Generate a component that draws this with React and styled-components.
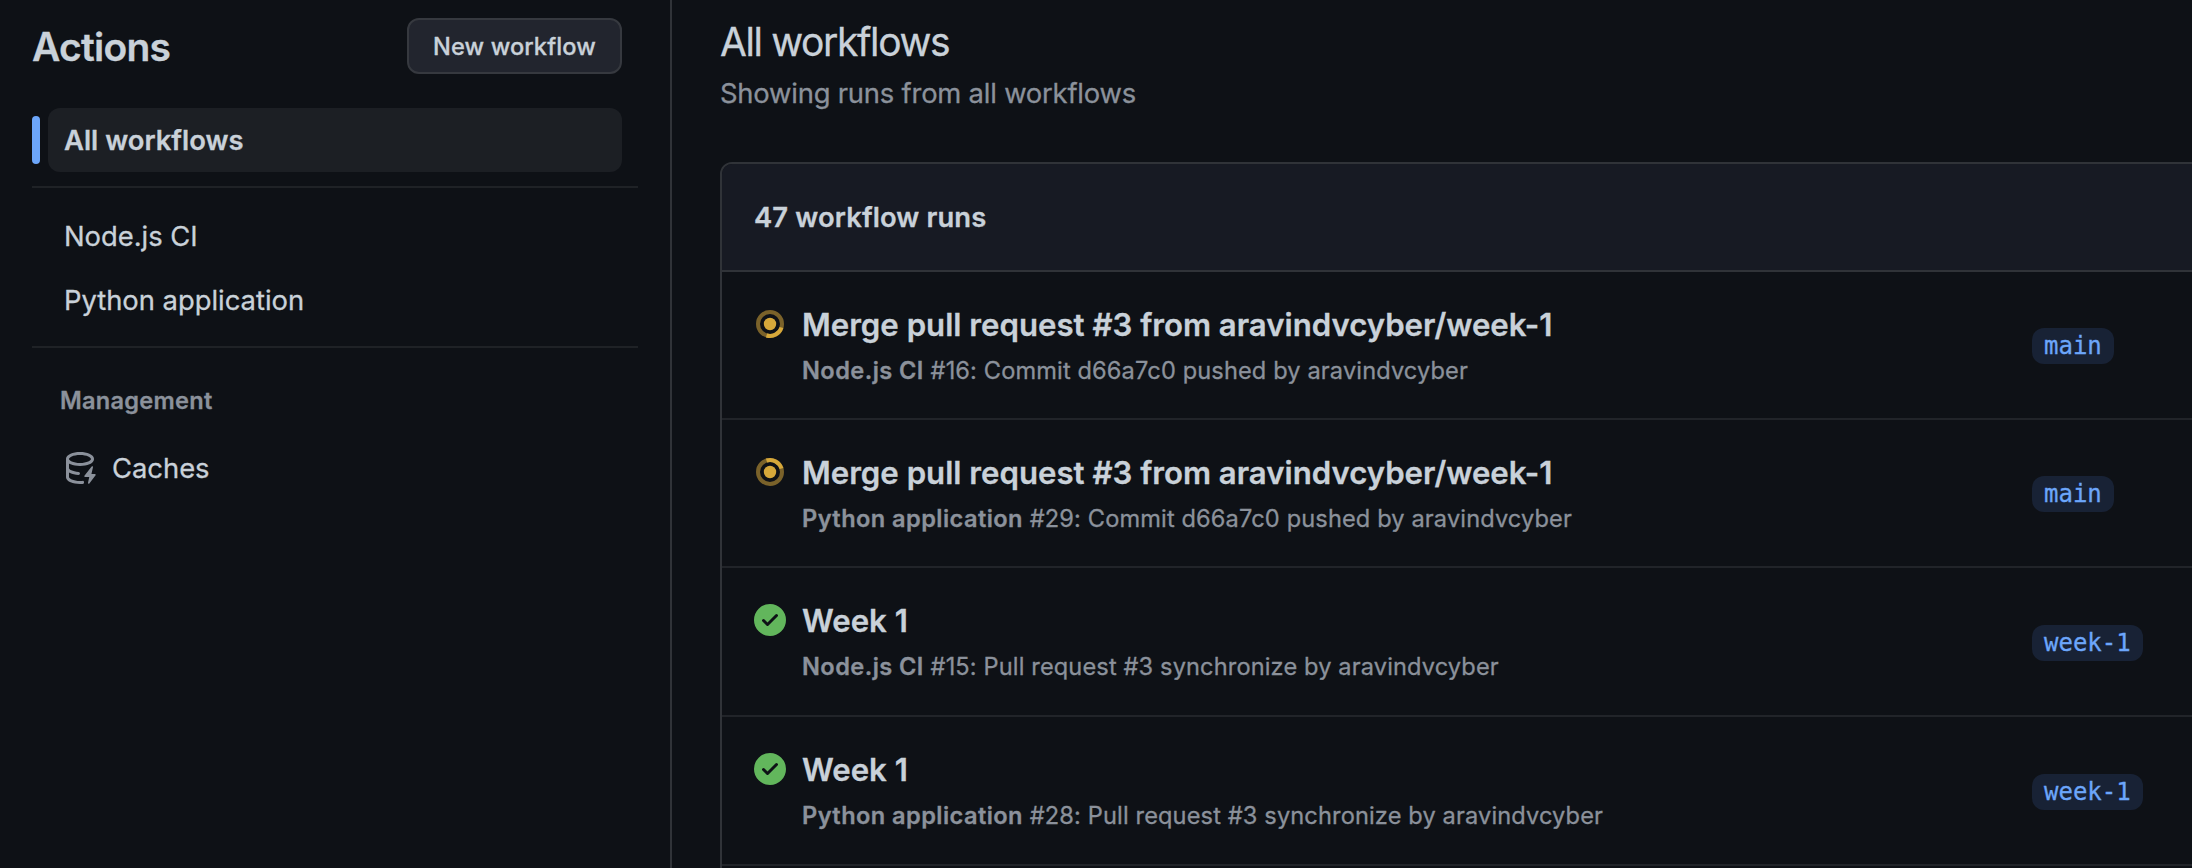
import React from "react";
import styled, { createGlobalStyle } from "styled-components";

const GlobalStyle = createGlobalStyle`
  *, *::before, *::after { box-sizing: border-box; }
  html, body { margin: 0; background: #0e1116; }
  body {
    color: #c9d1d9;
    font-family: Inter, "Liberation Sans", sans-serif;
    font-size: 27.4px;
    overflow: hidden;
    -webkit-font-smoothing: antialiased;
    -webkit-text-stroke: 0.3px currentColor;
  }
`;

const Page = styled.div`
  display: flex;
  width: 100%;
  height: 100vh;
  overflow: hidden;
`;

const Sidebar = styled.aside`
  flex: none;
  width: 672px;
  padding: 18px 32px 0;
  border-right: 2px solid #303338;
`;

const SidebarHeader = styled.header`
  display: flex;
  align-items: center;
  justify-content: space-between;
  height: 56px;
  margin: 0 16px 34px 0;
`;

const SidebarTitle = styled.h2`
  margin: 0;
  padding-top: 1px;
  font-size: 39px;
  font-weight: 600;
  line-height: 56px;
  letter-spacing: -0.75px;
`;

const Button = styled.button`
  width: 215px;
  height: 56px;
  padding: 1px 0 0;
  border: 2px solid #36393f;
  border-radius: 12px;
  background: #22252e;
  color: inherit;
  font: 500 23.6px/1 Inter, "Liberation Sans", sans-serif;
  letter-spacing: 0.1px;
`;

const NavItem = styled.a`
  display: flex;
  align-items: center;
  gap: ${(p) => (p.$selected ? "8px" : "16px")};
  height: 64px;
  margin: 0 16px 0 ${(p) => (p.$selected ? "0" : "16px")};
  padding-left: ${(p) => (p.$selected ? "0" : "16px")};
  letter-spacing: -0.02px;
`;

const SelectedMark = styled.span`
  width: 8px;
  height: 48px;
  border-radius: 6px;
  background: #6ca6fa;
`;

const SelectedLabel = styled.span`
  flex: 1;
  height: 64px;
  padding-left: 16px;
  border-radius: 12px;
  background: #1c1f24;
  font-weight: 600;
  line-height: 64px;
  letter-spacing: 0;
`;

const Divider = styled.hr`
  height: 2px;
  margin: ${(p) => p.$margin};
  border: 0;
  background: #1f2226;
`;

const GroupTitle = styled.h3`
  margin: 0 0 17px;
  padding-left: 28px;
  color: #8b919b;
  font-size: 23.6px;
  font-weight: 600;
  line-height: 36px;
  letter-spacing: 0.25px;
`;

const CacheSvg = styled.svg`
  flex: none;
  width: 32px;
  height: 32px;
  fill: #8b919b;
`;

const Main = styled.main`
  flex: 1;
  min-width: 0;
  padding: 12px 0 0 48px;
`;

const PageTitle = styled.h1`
  margin: 0;
  font-size: 39px;
  font-weight: 400;
  line-height: 60px;
  letter-spacing: -1.38px;
`;

const Subtitle = styled.p`
  margin: 0 0 48px;
  color: #8b919b;
  line-height: 42px;
  letter-spacing: -0.21px;
`;

const RunsBox = styled.section`
  min-height: 900px;
  margin-right: -24px;
  border: 2px solid #303338;
  border-radius: 12px;
  overflow: hidden;
`;

const RunsHeader = styled.header`
  height: 108px;
  padding-left: 32px;
  border-bottom: 2px solid #303338;
  background: #171a23;
  font-weight: 600;
  line-height: 106px;
  letter-spacing: 0.12px;
`;

const Row = styled.article`
  display: grid;
  grid-template-columns: 32px 1214px auto;
  column-gap: 16px;
  justify-content: start;
  align-items: start;
  height: ${(p) => p.$height}px;
  padding-left: 32px;
  border-bottom: 2px solid #212429;
`;

const StatusSvg = styled.svg`
  width: 32px;
  height: 32px;
  margin-top: 36px;
`;

const RunText = styled.div`
  padding-top: 29px;
`;

const RunTitle = styled.h4`
  margin: 0;
  font-size: 31.2px;
  font-weight: 600;
  line-height: 48px;
  letter-spacing: -0.01px;
`;

const RunMeta = styled.p`
  margin: 0;
  padding-top: 1px;
  color: #8b919b;
  font-size: 23.6px;
  line-height: 42px;
  letter-spacing: 0.13px;
`;

const WorkflowName = styled.strong`
  font-weight: 600;
  letter-spacing: 0.43px;
`;

const Branch = styled.a`
  height: 36px;
  margin-top: ${(p) => p.$offset}px;
  padding: 0 12px;
  border-radius: 12px;
  background: #182235;
  color: #6ca6fa;
  font: 24px/36px "DejaVu Sans Mono", monospace;
  justify-self: start;
`;

function CacheIcon() {
  return (
    <CacheSvg viewBox="0 0 16 16">
      <path d="M2.5 5.724V8c0 .248.238.7 1.169 1.159.874.43 2.144.745 3.62.822a.75.75 0 1 1-.078 1.498c-1.622-.085-3.102-.432-4.204-.975a5.565 5.565 0 0 1-.507-.28V12.5c0 .133.058.318.282.551.227.237.591.483 1.101.707 1.015.447 2.47.742 4.117.742.406 0 .802-.018 1.183-.052a.751.751 0 1 1 .134 1.494C8.89 15.98 8.45 16 8 16c-1.805 0-3.475-.32-4.721-.869-.623-.274-1.173-.619-1.579-1.041-.408-.425-.7-.964-.7-1.59v-9c0-.626.292-1.165.7-1.591.406-.42.956-.766 1.579-1.04C4.525.32 6.195 0 8 0c1.806 0 3.476.32 4.721.869.623.274 1.173.619 1.579 1.041.408.425.7.964.7 1.59 0 .626-.292 1.165-.7 1.591-.406.42-.956.766-1.578 1.04C11.475 6.68 9.805 7 8 7c-1.805 0-3.475-.32-4.721-.869a6.15 6.15 0 0 1-.779-.407Zm0-2.224c0 .133.058.318.282.551.227.237.591.483 1.101.707C4.898 5.205 6.353 5.5 8 5.5c1.646 0 3.101-.295 4.118-.742.508-.224.873-.471 1.1-.708.224-.232.282-.417.282-.55 0-.133-.058-.318-.282-.551-.227-.237-.591-.483-1.101-.707C11.102 1.795 9.647 1.5 8 1.5c-1.646 0-3.101.295-4.118.742-.508.224-.873.471-1.1.708-.224.232-.282.417-.282.55Z" />
      <path d="M14.49 7.582a.375.375 0 0 0-.66-.313l-3.625 4.625a.375.375 0 0 0 .295.606h2.127l-.619 2.922a.375.375 0 0 0 .666.304l3.125-4.125A.375.375 0 0 0 15.5 11h-1.778l.769-3.418Z" />
    </CacheSvg>
  );
}

function RunningIcon({ angle }) {
  return (
    <StatusSvg viewBox="0 0 32 32" fill="none">
      <circle cx="16" cy="16" r="12" stroke="#7a622a" strokeWidth="4" />
      <path
        d="M28 16A12 12 0 0 1 16 28"
        stroke="#d6a83a"
        strokeWidth="4"
        transform={`rotate(${angle} 16 16)`}
      />
      <circle cx="16" cy="16" r="6.2" fill="#d6a83a" />
    </StatusSvg>
  );
}

function SuccessIcon() {
  return (
    <StatusSvg viewBox="0 0 16 16" fill="#62b65c">
      <path d="M8 16A8 8 0 1 1 8 0a8 8 0 0 1 0 16Zm3.78-9.72a.751.751 0 0 0-.018-1.042.751.751 0 0 0-1.042-.018L6.75 9.19 5.28 7.72a.751.751 0 0 0-1.042.018.751.751 0 0 0-.018 1.042l2 2a.75.75 0 0 0 1.06 0Z" />
    </StatusSvg>
  );
}

const runs = [
  { icon: <RunningIcon angle={17} />, title: "Merge pull request #3 from aravindvcyber/week-1", workflow: "Node.js CI", meta: "#16: Commit d66a7c0 pushed by aravindvcyber", branch: "main", height: 148, offset: 56 },
  { icon: <RunningIcon angle={-107} />, title: "Merge pull request #3 from aravindvcyber/week-1", workflow: "Python application", meta: "#29: Commit d66a7c0 pushed by aravindvcyber", branch: "main", height: 148, offset: 56 },
  { icon: <SuccessIcon />, title: "Week 1", workflow: "Node.js CI", meta: "#15: Pull request #3 synchronize by aravindvcyber", branch: "week-1", height: 149, offset: 57 },
  { icon: <SuccessIcon />, title: "Week 1", workflow: "Python application", meta: "#28: Pull request #3 synchronize by aravindvcyber", branch: "week-1", height: 149, offset: 57 },
];

export default function App() {
  return (
    <>
      <GlobalStyle />
      <Page>
        <Sidebar>
          <SidebarHeader>
            <SidebarTitle>Actions</SidebarTitle>
            <Button>New workflow</Button>
          </SidebarHeader>
          <NavItem $selected>
            <SelectedMark />
            <SelectedLabel>All workflows</SelectedLabel>
          </NavItem>
          <Divider $margin="14px 0 16px" />
          <NavItem>Node.js CI</NavItem>
          <NavItem>Python application</NavItem>
          <Divider $margin="14px 0 35px" />
          <GroupTitle>Management</GroupTitle>
          <NavItem>
            <CacheIcon />
            Caches
          </NavItem>
        </Sidebar>
        <Main>
          <PageTitle>All workflows</PageTitle>
          <Subtitle>Showing runs from all workflows</Subtitle>
          <RunsBox>
            <RunsHeader>47 workflow runs</RunsHeader>
            {runs.map((run) => (
              <Row key={run.workflow + run.meta} $height={run.height}>
                {run.icon}
                <RunText>
                  <RunTitle>{run.title}</RunTitle>
                  <RunMeta>
                    <WorkflowName>{run.workflow}</WorkflowName> {run.meta}
                  </RunMeta>
                </RunText>
                <Branch $offset={run.offset}>{run.branch}</Branch>
              </Row>
            ))}
          </RunsBox>
        </Main>
      </Page>
    </>
  );
}
